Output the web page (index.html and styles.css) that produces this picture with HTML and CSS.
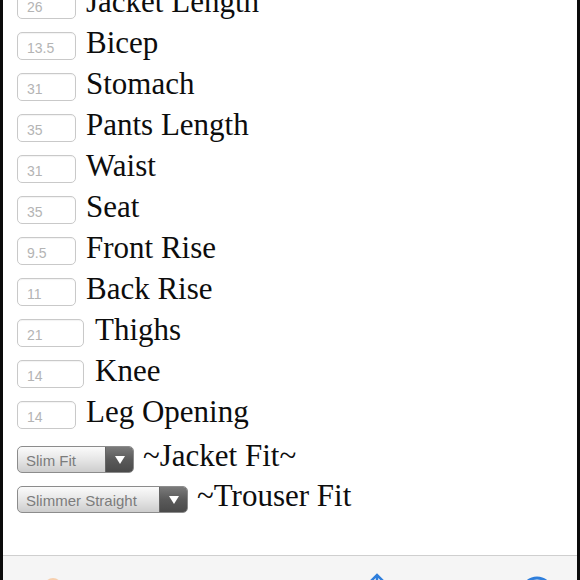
FILE: index.html
```html
<!DOCTYPE html>
<html>
<head>
<meta charset="utf-8">
<link rel="stylesheet" href="styles.css">
</head>
<body>
<div class="frame">
  <main class="main">
    <div class="list">
      <div class="row"><span class="box">26</span><span class="label">Jacket Length</span></div>
      <div class="row"><span class="box">13.5</span><span class="label">Bicep</span></div>
      <div class="row"><span class="box">31</span><span class="label">Stomach</span></div>
      <div class="row"><span class="box">35</span><span class="label">Pants Length</span></div>
      <div class="row"><span class="box">31</span><span class="label">Waist</span></div>
      <div class="row"><span class="box">35</span><span class="label">Seat</span></div>
      <div class="row"><span class="box">9.5</span><span class="label">Front Rise</span></div>
      <div class="row"><span class="box">11</span><span class="label">Back Rise</span></div>
      <div class="row"><span class="box box-wide">21</span><span class="label label-pad">Thighs</span></div>
      <div class="row"><span class="box box-wide">14</span><span class="label label-pad">Knee</span></div>
      <div class="row"><span class="box">14</span><span class="label">Leg Opening</span></div>
      <div class="row row-sel row-sel-first"><span class="select sel-short"><span class="sel-text">Slim Fit</span><span class="sel-btn"><span class="tri"></span></span></span><span class="label label-sel">~Jacket Fit~</span></div>
      <div class="row row-sel"><span class="select sel-long"><span class="sel-text">Slimmer Straight</span><span class="sel-btn"><span class="tri"></span></span></span><span class="label label-sel">~Trouser Fit</span></div>
    </div>
  </main>
  <footer class="toolbar">
    <svg class="ico ico-a" width="20" height="20" viewBox="0 0 20 20"><circle cx="10" cy="12" r="8" fill="none" stroke="#f6cfae" stroke-width="2"/></svg>
    <svg class="ico ico-b" width="20" height="20" viewBox="0 0 20 20"><path d="M4 9 L10 3 L16 9" fill="none" stroke="#2f7fdc" stroke-width="2.5"/><path d="M10 3 V18" stroke="#2f7fdc" stroke-width="2.5"/></svg>
    <svg class="ico ico-c" width="34" height="20" viewBox="0 0 34 20"><circle cx="17" cy="18" r="15" fill="none" stroke="#2f7fdc" stroke-width="3"/></svg>
  </footer>
</div>
</body>
</html>
```
FILE: styles.css
```css
html, body {
  margin: 0;
  padding: 0;
  background: #ffffff;
}
.frame {
  width: 580px;
  height: 580px;
  box-sizing: border-box;
  border-left: 3px solid #0b0b0b;
  border-right: 3px solid #0b0b0b;
  display: flex;
  flex-direction: column;
  overflow: hidden;
}
.main {
  flex: 1;
  overflow: hidden;
  border-bottom: 1px solid #cfcfcf;
  padding-left: 14px;
}
.list {
  margin-top: -19px;
}
.row {
  display: flex;
  align-items: baseline;
  height: 41px;
  line-height: 41px;
  gap: 10px;
}
.row-sel {
  height: 40px;
  line-height: 40px;
  gap: 9px;
}
.row-sel-first {
  margin-top: 4px;
}
.label {
  font-family: "Liberation Serif", "Times New Roman", serif;
  font-size: 31px;
  color: #0d0d0d;
}
.label-pad {
  padding-left: 1px;
}
.box {
  display: inline-block;
  box-sizing: border-box;
  width: 59px;
  height: 28px;
  line-height: 14px;
  padding: 8px 0 0 9px;
  border: 1px solid #c9c9c9;
  border-radius: 5px;
  background: #ffffff;
  box-shadow: inset 0 1px 1px rgba(0,0,0,0.05);
  font-family: "Liberation Sans", Arial, sans-serif;
  font-size: 14px;
  color: #b4b4b4;
}
.box-wide {
  width: 67px;
}
.select {
  display: inline-flex;
  box-sizing: border-box;
  height: 27px;
  border: 1px solid #8c8c8c;
  border-radius: 5px;
  overflow: hidden;
  background: linear-gradient(#fbfbfb, #e6e6e6 50%, #cdcdcd);
  font-family: "Liberation Sans", Arial, sans-serif;
  font-size: 15px;
  color: #7c7c7c;
  line-height: 15px;
}
.sel-short { width: 117px; }
.sel-long { width: 171px; }
.sel-text {
  flex: 1;
  padding: 6px 0 0 8px;
}
.sel-btn {
  width: 27px;
  display: flex;
  align-items: center;
  justify-content: center;
  background: linear-gradient(#7a7a7a, #5a5a5a 50%, #4a4a4a);
  border-left: 1px solid #666;
}
.tri {
  width: 0;
  height: 0;
  border-left: 5px solid transparent;
  border-right: 5px solid transparent;
  border-top: 8px solid #ffffff;
}
.toolbar {
  height: 24px;
  flex: none;
  background: #f5f5f5;
  display: flex;
  align-items: flex-start;
  padding-top: 19px;
  box-sizing: border-box;
}
.ico { flex: none; }
.ico-a { margin-left: 40px; }
.ico-b { margin-left: 304px; margin-top: -3px; }
.ico-c { margin-left: 133px; }
```
